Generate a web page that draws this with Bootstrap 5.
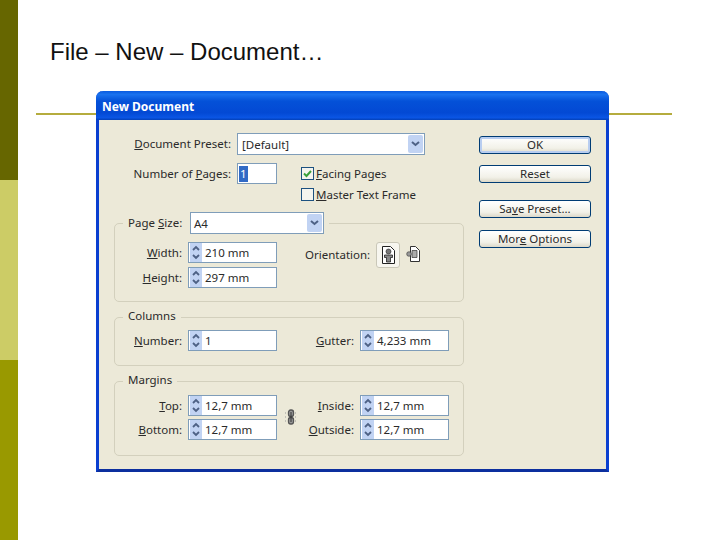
<!doctype html>
<html lang="en"><head><meta charset="utf-8"><title>New Document</title>
<link href="https://cdn.jsdelivr.net/npm/bootstrap@5.3.0/dist/css/bootstrap.min.css" rel="stylesheet">
<style>
html,body{margin:0;height:540px;overflow:hidden;background:#fff}
.slide{width:720px;height:540px;position:relative}
.strip{width:18px}
.s1{height:180px;background:#666600}.s2{height:180px;background:#cccc66}.s3{height:180px;background:#999900}
.slide-main{width:702px}
.slide-title{font:24px/28px "Liberation Sans",sans-serif;color:#111;margin:38px 0 0 32px}
.gold-rule{height:2px;background:#b5ac3e;margin:47px 0 0 18px;width:636px}
.dlg{position:absolute;left:96px;top:91px;width:513px;height:381px;background:#ece9d8;border:3px solid #0a3fd0;border-top:0;border-bottom-color:#0c2f9e;border-radius:7px 7px 0 0;font:11.5px/14px "Noto Sans",sans-serif;color:#2a2a2a}
.dlg-head{height:29px;margin:0 -3px;padding:0 0 0 6px;border-radius:7px 7px 0 0;background:linear-gradient(#0a5be0 0,#1a72ee 12%,#0451d8 35%,#0349d4 75%,#0a55e4 92%,#0340b8 100%);color:#fff;font:bold 12px/31px "Noto Sans",sans-serif}
.dlg-body{padding:13px 0 0 15px}
.left-col{width:350px}
.btn-col{width:112px;margin:3px 0 0 15px}
.lbl{text-align:right;flex:none}
.w117{width:117px}.w67{width:67px}.w71{width:71px}.w56{width:56px}
.field{background:#fff;border:1px solid #7f9db9;height:21px;flex:none;display:flex;align-items:center;line-height:19px;color:#2a2a2a}
.sel{height:22px;justify-content:space-between;padding-left:3px}
.preset-txt{padding-left:1px}
.sel-preset{width:188px}.sel-size{width:134px}
.arrow{width:15px;height:18px;margin-right:1px;background:#c1d3f3;border-radius:2px;display:flex;align-items:center;justify-content:center}
.num{width:40px;padding-left:1px}
.picked{background:#316ac5;color:#fff;padding:0 1px;line-height:16px}
.spin{width:89px;padding-left:1px}
.spinner{width:12px;height:19px;margin-right:3px;background:#c1d3f3;flex:none}
.spinner svg{display:block}
.gap6{gap:6px}
.chk-col{margin-left:18px}
.chk-row{height:21px;gap:2px;display:flex;align-items:center}
.box{width:13px;height:13px;border:1px solid #1c5180;background:#f4f4ee;flex:none;display:block}
.box svg{display:block}
.grp{border:1px solid #d3d0bd;border-radius:5px}
.g1{margin-top:18px;height:79px}.g2{margin-top:15px;height:49px}.g3{margin-top:15px;height:75px}
.legend-row{margin-left:8px;display:flex}
.legend-txt{background:#ece9d8;padding:0 5px;height:14px;align-self:center}
.legend-lbl{width:56px;flex:none}
.g1 .legend-row{margin-top:-12px}
.legend-box{background:#ece9d8;padding:0 5px;display:flex;align-items:center;gap:6px}
.g2 .legend-row,.g3 .legend-row{margin-top:-9px}
.grp-rows{gap:4px;margin-top:8px}
.g3 .grp-rows{gap:3px}
.g2 .grp-rows{gap:6px;margin-top:7px}
.orient{margin-left:28px;height:21px;padding-top:6px}
.or-btn{width:24px;height:26px;margin-left:6px;border:1px solid #c9c7b8;border-radius:3px;background:#f7f6ef;display:flex;align-items:center;justify-content:center;padding:0;flex:none}
.or-plain{margin-left:6px;flex:none;padding-top:4px}
.chain{width:14px;margin:22px 0 0 7px;flex:none}
.xp-btn{--bs-btn-padding-y:0;--bs-btn-padding-x:0;--bs-btn-font-size:11.5px;--bs-btn-line-height:14px;--bs-btn-border-radius:3px;--bs-btn-border-color:#003c74;--bs-btn-color:#2a2a2a;width:112px;height:18px;display:block;font-family:"Noto Sans",sans-serif;background:linear-gradient(#fff,#f2f1e8 70%,#dcd8c8)}
.ok-btn{box-shadow:inset 0 0 0 2px #b8cdf0}
.m-reset{margin-top:11px}.m-save{margin-top:17px}.m-more{margin-top:12px}
</style></head><body>
<div class="slide d-flex">
  <div class="strip flex-none">
    <div class="s1"></div><div class="s2"></div><div class="s3"></div>
  </div>
  <div class="slide-main">
    <div class="slide-title">File – New – Document…</div>
    <div class="gold-rule"></div>
  </div>
  <div class="dlg">
    <div class="dlg-head">New Document</div>
    <div class="dlg-body d-flex">
      <div class="left-col">
        <div class="d-flex align-items-center gap6">
          <div class="lbl w117"><u>D</u>ocument Preset:</div>
          <div class="field sel sel-preset"><span class="preset-txt">[Default]</span><span class="arrow"><svg width="9" height="6" viewBox="0 0 9 6"><path d="M1 1l3.500 3L8 1" fill="none" stroke="#4d6185" stroke-width="2"/></svg></span></div>
        </div>
        <div class="d-flex mt-2 gap6">
          <div class="lbl w117 pt-1">Number of <u>P</u>ages:</div>
          <div class="field num"><span class="picked">1</span></div>
          <div class="chk-col">
            <div class="chk-row"><span class="box"><svg width="11" height="11" viewBox="0 0 11 11"><path d="M2 5.500l2.500 2.500L9 3" fill="none" stroke="#3aa03a" stroke-width="2"/></svg></span><span><u>F</u>acing Pages</span></div>
            <div class="chk-row"><span class="box"></span><span><u>M</u>aster Text Frame</span></div>
          </div>
        </div>

        <div class="grp g1">
          <div class="legend-row"><div class="legend-box"><span class="legend-lbl">Page <u>S</u>ize:</span>
            <div class="field sel sel-size"><span>A4</span><span class="arrow"><svg width="9" height="6" viewBox="0 0 9 6"><path d="M1 1l3.500 3L8 1" fill="none" stroke="#4d6185" stroke-width="2"/></svg></span></div></div></div>
          <div class="d-flex">
            <div class="d-flex flex-column grp-rows">
              <div class="d-flex align-items-center gap6"><div class="lbl w67"><u>W</u>idth:</div><div class="field spin"><span class="spinner"><svg width="12" height="19" viewBox="0 0 12 19"><path d="M3 7l3-3 3 3M3 12l3 3 3-3" fill="none" stroke="#4d6185" stroke-width="1.800"/></svg></span>210 mm</div></div>
              <div class="d-flex align-items-center gap6"><div class="lbl w67"><u>H</u>eight:</div><div class="field spin"><span class="spinner"><svg width="12" height="19" viewBox="0 0 12 19"><path d="M3 7l3-3 3 3M3 12l3 3 3-3" fill="none" stroke="#4d6185" stroke-width="1.800"/></svg></span>297 mm</div></div>
            </div>
            <div class="d-flex mt-2">
              <div class="orient">Orientation:</div>
              <button type="button" class="or-btn" aria-label="Portrait"><svg width="15" height="18" viewBox="0 0 15 18"><path d="M1.500.5h8l4 4v13h-12z" fill="#fff" stroke="#222"/><circle cx="7.500" cy="5.500" r="2.500" fill="#777" stroke="#222" stroke-width=".6"/><path d="M3.500 9h8v2.500h-2V16h-4v-4.500h-2z" fill="#888" stroke="#222" stroke-width=".8"/></svg></button>
              <span class="or-plain"><svg width="14" height="16" viewBox="0 0 14 16"><path d="M4.500.5h5l4 4v11h-9z" fill="#fff" stroke="#333"/><circle cx="3" cy="8" r="2.300" fill="#999" stroke="#333" stroke-width=".6"/><path d="M6 4.500h5v7H6z" fill="#aaa" stroke="#333" stroke-width=".7"/></svg></span>
            </div>
          </div>
        </div>

        <div class="grp g2">
          <div class="legend-row"><span class="legend-txt">Columns</span></div>
          <div class="d-flex grp-rows">
            <div class="lbl w67 pt-1"><u>N</u>umber:</div><div class="field spin"><span class="spinner"><svg width="12" height="19" viewBox="0 0 12 19"><path d="M3 7l3-3 3 3M3 12l3 3 3-3" fill="none" stroke="#4d6185" stroke-width="1.800"/></svg></span>1</div>
            <div class="lbl w71 pt-1"><u>G</u>utter:</div><div class="field spin"><span class="spinner"><svg width="12" height="19" viewBox="0 0 12 19"><path d="M3 7l3-3 3 3M3 12l3 3 3-3" fill="none" stroke="#4d6185" stroke-width="1.800"/></svg></span>4,233 mm</div>
          </div>
        </div>

        <div class="grp g3">
          <div class="legend-row"><span class="legend-txt">Mar<u>g</u>ins</span></div>
          <div class="d-flex">
            <div class="d-flex flex-column grp-rows">
              <div class="d-flex align-items-center gap6"><div class="lbl w67"><u>T</u>op:</div><div class="field spin"><span class="spinner"><svg width="12" height="19" viewBox="0 0 12 19"><path d="M3 7l3-3 3 3M3 12l3 3 3-3" fill="none" stroke="#4d6185" stroke-width="1.800"/></svg></span>12,7 mm</div></div>
              <div class="d-flex align-items-center gap6"><div class="lbl w67"><u>B</u>ottom:</div><div class="field spin"><span class="spinner"><svg width="12" height="19" viewBox="0 0 12 19"><path d="M3 7l3-3 3 3M3 12l3 3 3-3" fill="none" stroke="#4d6185" stroke-width="1.800"/></svg></span>12,7 mm</div></div>
            </div>
            <div class="chain"><svg width="14" height="16" viewBox="0 0 14 16"><g fill="#999" stroke="#555" stroke-width="1.300"><rect x="4.500" y="1" width="5" height="6.500" rx="2.200"/><rect x="4.500" y="8.500" width="5" height="6.500" rx="2.200"/></g><path d="M7 3v10" stroke="#333"/><path d="M1 4h2M1 8h2M1 12h2M11 4h2M11 8h2M11 12h2" stroke="#999" stroke-dasharray="1 1"/></svg></div>
            <div class="d-flex flex-column grp-rows">
              <div class="d-flex align-items-center gap6"><div class="lbl w56"><u>I</u>nside:</div><div class="field spin"><span class="spinner"><svg width="12" height="19" viewBox="0 0 12 19"><path d="M3 7l3-3 3 3M3 12l3 3 3-3" fill="none" stroke="#4d6185" stroke-width="1.800"/></svg></span>12,7 mm</div></div>
              <div class="d-flex align-items-center gap6"><div class="lbl w56"><u>O</u>utside:</div><div class="field spin"><span class="spinner"><svg width="12" height="19" viewBox="0 0 12 19"><path d="M3 7l3-3 3 3M3 12l3 3 3-3" fill="none" stroke="#4d6185" stroke-width="1.800"/></svg></span>12,7 mm</div></div>
            </div>
          </div>
        </div>
      </div>
      <div class="btn-col">
        <button type="button" class="btn xp-btn ok-btn">OK</button>
        <button type="button" class="btn xp-btn m-reset">Reset</button>
        <button type="button" class="btn xp-btn m-save">Sa<u>v</u>e Preset...</button>
        <button type="button" class="btn xp-btn m-more">Mor<u>e</u> Options</button>
      </div>
    </div>
  </div>
</div>
<script src="https://cdn.jsdelivr.net/npm/bootstrap@5.3.0/dist/js/bootstrap.bundle.min.js"></script>
</body></html>
